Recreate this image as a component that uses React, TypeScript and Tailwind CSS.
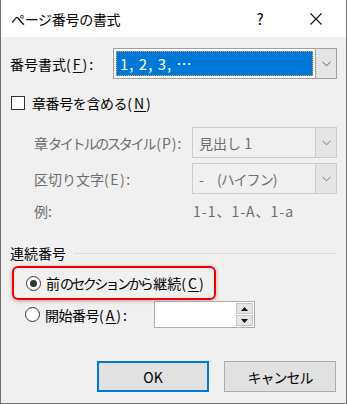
import React from "react";

const FONT = "font-['Noto_Sans_CJK_JP','Noto_Sans',sans-serif]";

function Chevron({ color = "#333" }: { color?: string }) {
  return (
    <svg width="9" height="6" viewBox="0 0 9 6">
      <polyline points="0.5,0.8 4.5,4.8 8.5,0.8" fill="none" stroke={color} strokeWidth="1" />
    </svg>
  );
}

function Key({ k, colon }: { k: string; colon?: boolean }) {
  return (
    <span className="tracking-[2px]">
      (<span className="underline underline-offset-2">{k}</span>){colon && ":"}
    </span>
  );
}

function Radio({ on }: { on?: boolean }) {
  return (
    <div className="w-[15px] h-[15px] rounded-full border border-[#333] bg-white flex items-center justify-center shrink-0">
      {on && <div className="w-[7px] h-[7px] rounded-full bg-[#333]" />}
    </div>
  );
}

export default function App() {
  return (
    <div className={`w-[347px] h-[404px] bg-white text-[14px] leading-none text-black ${FONT}`}>
      <div className="w-[347px] h-[404px] flex flex-col border-x border-b border-[#707070]">
        {/* Title bar */}
        <div className="h-[37px] bg-white flex items-center shrink-0">
          <span className="ml-[10px] tracking-[-0.3px] text-[14px]">ページ番号の書式</span>
          <span className="ml-auto text-[15px] w-[16px] text-center mr-[42px]">?</span>
          <svg width="12" height="12" viewBox="0 0 12 12" className="mr-[24px]">
            <path d="M0.5 0.5 L11.5 11.5 M11.5 0.5 L0.5 11.5" stroke="#111" strokeWidth="1.1" />
          </svg>
        </div>

        {/* Body */}
        <div className="flex-1 bg-[#f0f0f0] flex flex-col">
          {/* 番号書式 */}
          <div className="mt-[11px] flex items-center h-[31px]">
            <span className="ml-[9px] w-[103px]">
              番号書式<Key k="F" colon />
            </span>
            <div className="w-[224px] h-[31px] flex border border-[#a0a0a0] bg-white">
              <div className="flex-1 p-[2px] flex">
                <div className="flex-1 bg-[#0078d7] border border-dotted border-[#f0a040] flex items-center pl-[3px] text-white text-[15px] tracking-[1px]">
                  1, 2, 3, …
                </div>
              </div>
              <div className="w-[21px] bg-[#e5e5e5] border-l border-[#a0a0a0] flex items-center justify-center">
                <Chevron color="#555" />
              </div>
            </div>
          </div>

          {/* 章番号を含める */}
          <div className="mt-[14px] h-[20px] flex items-center">
            <div className="ml-[10px] w-[14px] h-[14px] border border-[#333] bg-white shrink-0" />
            <span className="ml-[7px] tracking-[-0.4px]">
              章番号を含める<Key k="N" />
            </span>
          </div>

          {/* 章タイトルのスタイル */}
          <div className="mt-[14px] h-[31px] flex items-center text-[#6d6d6d]">
            <span className="ml-[33px] w-[158px]">
              章<span className="tracking-[-2.2px]">タイトルのスタイル</span>
              <span className="ml-[2px] tracking-[1px]">(P):</span>
            </span>
            <div className="w-[145px] h-[31px] flex border border-[#cccccc] bg-[#f0f0f0]">
              <div className="flex-1 flex items-center pl-[6px]">見出し 1</div>
              <div className="w-[21px] bg-[#e5e5e5] border-l border-[#cccccc] flex items-center justify-center">
                <Chevron color="#777" />
              </div>
            </div>
          </div>

          {/* 区切り文字 */}
          <div className="mt-[5px] h-[31px] flex items-center text-[#6d6d6d]">
            <span className="ml-[33px] w-[158px]">
              区切り文字<span className="tracking-[1.5px]">(E):</span>
            </span>
            <div className="w-[145px] h-[31px] flex border border-[#cccccc] bg-[#f0f0f0]">
              <div className="flex-1 flex items-center pl-[6px]">
                <span className="w-[18px]">-</span>
                <span className="tracking-[-1px]">(ハイフン)</span>
              </div>
              <div className="w-[21px] bg-[#e5e5e5] border-l border-[#cccccc] flex items-center justify-center">
                <Chevron color="#777" />
              </div>
            </div>
          </div>

          {/* 例 */}
          <div className="mt-[7px] h-[20px] flex items-center text-[#6d6d6d]">
            <span className="ml-[33px] w-[159px]">例:</span>
            <span className="tracking-[1px]">1-1、1-A、1-a</span>
          </div>

          {/* 連続番号 */}
          <div className="mt-[22px] h-[20px] flex items-center">
            <span className="ml-[9px]">連続番号</span>
            <div className="ml-[8px] mr-[9px] flex-1 h-px bg-[#dcdcdc]" />
          </div>

          {/* 前のセクションから継続 */}
          <div className="mt-[3px] ml-[11px] w-[204px] h-[34px] rounded-[6px] border-2 border-[#f00000] shadow-[0_1px_4px_rgba(120,0,0,0.35)] flex items-center">
            <div className="ml-[12px]">
              <Radio on />
            </div>
            <span className="ml-[5px]">
              前<span className="tracking-[-2.6px]">のセクションから</span>
              <span className="ml-[2px]">継続</span>
              <Key k="C" />
            </span>
          </div>

          {/* 開始番号 */}
          <div className="mt-[1px] h-[27px] flex items-center">
            <div className="ml-[24px]">
              <Radio />
            </div>
            <span className="ml-[5px] w-[109px] tracking-[-0.5px]">
              開始番号<Key k="A" colon />
            </span>
            <div className="w-[101px] h-[27px] bg-white border border-[#adadad] flex">
              <div className="flex-1" />
              <div className="w-[18px] flex flex-col py-[1px] pr-[1px] gap-[1px]">
                <div className="flex-1 bg-[#e5e5e5] border border-[#c8c8c8] flex items-center justify-center">
                  <svg width="7" height="4" viewBox="0 0 7 4">
                    <polygon points="3.5,0 7,4 0,4" fill="#111" />
                  </svg>
                </div>
                <div className="flex-1 bg-[#e5e5e5] border border-[#c8c8c8] flex items-center justify-center">
                  <svg width="7" height="4" viewBox="0 0 7 4">
                    <polygon points="0,0 7,0 3.5,4" fill="#111" />
                  </svg>
                </div>
              </div>
            </div>
          </div>

          {/* Buttons */}
          <div className="mt-[33px] h-[31px] flex items-center">
            <button className="ml-[96px] w-[112px] h-[31px] bg-[#e1e1e1] border-2 border-[#0078d7] text-[14px]">
              OK
            </button>
            <button className="ml-[15px] w-[112px] h-[31px] bg-[#e1e1e1] border border-[#adadad] text-[14px] tracking-[-1px]">
              キャンセル
            </button>
          </div>
        </div>
      </div>
    </div>
  );
}
